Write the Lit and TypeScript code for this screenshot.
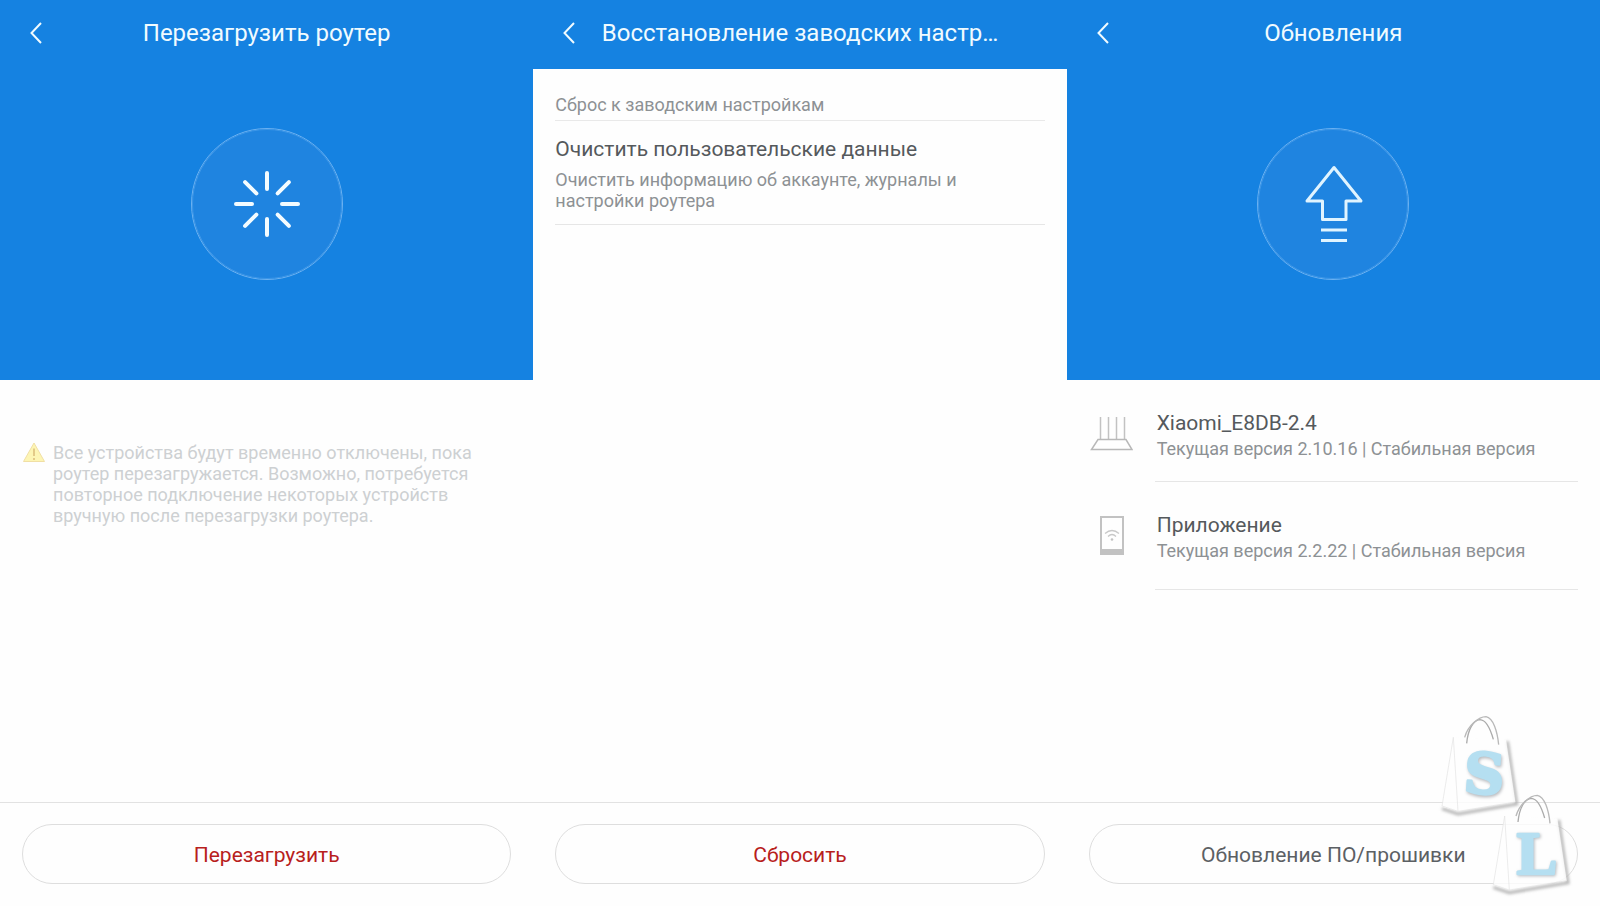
import { LitElement, html, svg, css } from "lit";
import { customElement } from "lit/decorators.js";

const backIcon = html`<svg class="chevron" viewBox="0 0 12 22" width="12" height="22" aria-hidden="true">
  <path d="M11 1 L1.5 11 L11 21" fill="none" stroke="currentColor" stroke-width="2" />
</svg>`;

const rays = [0, 45, 90, 135, 180, 225, 270, 315];

const spinnerIcon = html`<svg viewBox="0 0 150 150" width="150" height="150" aria-hidden="true">
  <g stroke="#f4fcff" stroke-width="4" stroke-linecap="round">
    ${rays.map((a) => svg`<line x1="75" y1="44" x2="75" y2="60" transform="rotate(${a} 75 75)" />`)}
  </g>
</svg>`;

const arrowIcon = html`<svg viewBox="0 0 150 150" width="150" height="150" aria-hidden="true">
  <path
    d="M76 38.5 L103 72 H88 V90.500 H64.500 V72 H49 Z M63 101 H89 M63 111.500 H89"
    fill="none" stroke="#e0f4ff" stroke-width="3" stroke-linejoin="round" />
</svg>`;

const warningIcon = html`<svg class="warn-icon" viewBox="0 0 22 21" width="22" height="21" aria-hidden="true">
  <path d="M11 1 L21.500 19.500 H0.500 Z" fill="#fdf5b4" stroke="#f0dfa4" stroke-width="1" stroke-linejoin="round" />
  <path d="M11 6.500 V14 M11 16 V18" stroke="#dcc07e" stroke-width="1.600" />
</svg>`;

const routerIcon = html`<svg viewBox="0 0 44 44" width="44" height="44" aria-hidden="true">
  <g fill="none" stroke="#c2c2c2" stroke-width="1.500">
    <path d="M11.500 5 V27 M19.500 5 V27 M27.500 5 V27 M35.500 5 V27" />
    <path d="M9 27.500 H37 L43 37.500 H2.500 Z" stroke="#b8b8b8" />
  </g>
</svg>`;

const phoneIcon = html`<svg viewBox="0 0 44 44" width="44" height="44" aria-hidden="true">
  <rect x="12" y="3" width="22" height="37" fill="none" stroke="#c2c2c2" stroke-width="2" />
  <rect x="12" y="35" width="22" height="5" fill="#c2c2c2" />
  <g fill="none" stroke="#c8c8c8" stroke-width="1.300">
    <path d="M16 19.500 Q23 13.500 30 19.500" />
    <path d="M19 22.500 Q23 18.500 27 22.500" />
  </g>
  <circle cx="23" cy="25.500" r="1.300" fill="#c2c2c2" />
</svg>`;

@customElement("phone-screen")
export class PhoneScreen extends LitElement {
  static properties = {
    heading: { type: String },
    action: { type: String },
    danger: { type: Boolean },
    hero: { type: Boolean },
  };

  declare heading: string;
  declare action: string;
  declare danger: boolean;
  declare hero: boolean;

  static styles = css`
    :host {
      display: flex;
      flex-direction: column;
      min-width: 0;
      background: #fefefe;
    }
    .bar {
      display: grid;
      grid-template-columns: 60px minmax(0, 1fr) 60px;
      align-items: center;
      height: 69px;
      padding-bottom: 4px;
      box-sizing: border-box;
      background: #1582e1;
      color: #f0fbff;
    }
    .back {
      display: flex;
      width: 60px;
      height: 48px;
      padding: 0 0 0 30px;
      align-items: center;
      border: 0;
      background: none;
      color: inherit;
      cursor: pointer;
    }
    .title {
      margin: 0;
      font-size: 24px;
      line-height: 32px;
      font-weight: 400;
      text-align: center;
      white-space: nowrap;
    }
    .hero {
      display: flex;
      justify-content: center;
      padding: 59px 0 100px;
      background: #1582e1;
    }
    .disc {
      display: flex;
      border: 1px solid #6cb2f2;
      outline: 1px solid #3d97e8;
      outline-offset: -2px;
      border-radius: 50%;
      background: #1f84e0;
    }
    .content {
      flex: 1;
    }
    .footer {
      padding: 21px 22px 22px;
      border-top: 1px solid #e2e2e2;
    }
    .action {
      display: block;
      width: 100%;
      height: 60px;
      padding: 2px 0 0;
      border: 1px solid #dedede;
      border-radius: 30px;
      background: #fefefe;
      color: #5c6064;
      font: 400 21px/28px Roboto, sans-serif;
      cursor: pointer;
    }
    .danger {
      color: #b8201c;
    }
  `;

  render() {
    return html`
      <header class="bar">
        <button class="back" aria-label="Назад">${backIcon}</button>
        <h1 class="title">${this.heading}</h1>
      </header>
      ${this.hero
        ? html`<div class="hero"><div class="disc"><slot name="icon"></slot></div></div>`
        : null}
      <main class="content"><slot></slot></main>
      <footer class="footer">
        <button class="action ${this.danger ? "danger" : ""}">${this.action}</button>
      </footer>
    `;
  }
}

@customElement("shop-watermark")
export class ShopWatermark extends LitElement {
  static styles = css`
    :host {
      display: block;
      pointer-events: none;
    }
    svg {
      display: block;
    }
    .letter {
      font-weight: 700;
      fill: #b5dff1;
      stroke: #b5dff1;
      stroke-width: 8px;
      stroke-linejoin: round;
    }
    .s {
      font-family: "DejaVu Serif", serif;
      font-size: 168px;
    }
    .l {
      font-family: "Liberation Serif", serif;
      font-size: 182px;
    }
    .shade {
      fill: #b9bcc0;
      stroke: #b9bcc0;
    }
  `;

  render() {
    return html`<svg viewBox="0 0 540 618" width="180" height="206" aria-hidden="true">
      <defs>
        <filter id="soft" x="-20%" y="-20%" width="140%" height="140%">
          <feGaussianBlur stdDeviation="4" />
        </filter>
        <g id="bag">
          <path d="M66 326 L114 342 L290 312 L262 124" fill="none" stroke="#b4b4b4" stroke-width="9" filter="url(#soft)" />
          <path d="M100 112 L258 120 L286 306 L114 334 L66 320 Z" fill="#fefefe" fill-opacity="0.820" />
          <path d="M100 112 L114 334 M100 112 L66 318 L114 334 L286 306" fill="none" stroke="#e2e2e2" stroke-width="2" />
          <g fill="none" stroke="#ababab" stroke-width="4">
            <path d="M140 130 C144 88 160 60 180 59 C200 60 212 90 220 118" />
            <path d="M134 112 C144 76 176 50 198 50 C220 54 232 94 236 134" stroke="#b9b9b9" stroke-width="4" />
          </g>
        </g>
      </defs>
      <use href="#bag" />
      <use href="#bag" x="154" y="236" />
      <text class="letter shade s" x="136" y="285" transform="rotate(4 190 220)" filter="url(#soft)">S</text>
      <text class="letter s" x="132" y="280" transform="rotate(4 190 220)">S</text>
      <text class="letter shade l" x="293" y="526" filter="url(#soft)">L</text>
      <text class="letter l" x="290" y="521">L</text>
    </svg>`;
  }
}

@customElement("app-root")
export class AppRoot extends LitElement {
  static styles = css`
    :host {
      display: grid;
      grid-template-columns: repeat(3, minmax(0, 1fr));
      position: relative;
      min-height: 100vh;
      overflow: hidden;
      background: #fefefe;
      font-family: Roboto, sans-serif;
    }
    h2,
    h3,
    p,
    ul {
      margin: 0;
      padding: 0;
      font-weight: 400;
    }
    .icon {
      display: flex;
    }
    .warning {
      display: flex;
      gap: 8px;
      padding: 62px 60px 0 23px;
      color: #cdd0d2;
      font-size: 18px;
      line-height: 21px;
    }
    .warn-icon {
      flex: none;
    }
    .settings {
      padding: 20px 22px 0;
    }
    .group {
      padding: 4px 0 3px;
      border-bottom: 1px solid #e9e9e9;
      color: #8d9194;
      font-size: 18px;
      line-height: 24px;
    }
    .setting {
      padding: 14px 40px 13px 0;
      border-bottom: 1px solid #e6e6e6;
    }
    .setting .name {
      padding-bottom: 6px;
    }
    .name {
      color: #55595c;
      font-size: 21px;
      line-height: 28px;
    }
    .note {
      color: #8d9194;
      font-size: 18px;
      line-height: 21px;
    }
    .list {
      list-style: none;
      padding: 0 22px;
    }
    .row {
      display: grid;
      grid-template-columns: 44px minmax(0, 1fr);
      gap: 22px;
    }
    .row svg {
      margin-top: 32px;
    }
    .info {
      padding: 29px 0 20px;
      border-bottom: 1px solid #e6e6e6;
    }
    .row:last-child .info {
      padding-bottom: 26px;
    }
    .info .note {
      line-height: 24px;
    }
    .info > * {
      padding-left: 2px;
    }
    .mark {
      position: absolute;
      right: 0;
      bottom: 0;
    }
  `;

  render() {
    return html`
      <phone-screen heading="Перезагрузить роутер" action="Перезагрузить" danger hero>
        <div class="icon" slot="icon">${spinnerIcon}</div>
        <div class="warning">
          ${warningIcon}
          <p>
            Все устройства будут временно отключены, пока роутер перезагружается. Возможно,
            потребуется повторное подключение некоторых устройств вручную после перезагрузки
            роутера.
          </p>
        </div>
      </phone-screen>

      <phone-screen heading="Восстановление заводских настр…" action="Сбросить" danger>
        <section class="settings">
          <h2 class="group">Сброс к заводским настройкам</h2>
          <div class="setting">
            <h3 class="name">Очистить пользовательские данные</h3>
            <p class="note">Очистить информацию об аккаунте, журналы и настройки роутера</p>
          </div>
        </section>
      </phone-screen>

      <phone-screen heading="Обновления" action="Обновление ПО/прошивки" hero>
        <div class="icon" slot="icon">${arrowIcon}</div>
        <ul class="list">
          <li class="row">
            ${routerIcon}
            <div class="info">
              <h2 class="name">Xiaomi_E8DB-2.4</h2>
              <p class="note">Текущая версия 2.10.16 | Стабильная версия</p>
            </div>
          </li>
          <li class="row">
            ${phoneIcon}
            <div class="info">
              <h2 class="name">Приложение</h2>
              <p class="note">Текущая версия 2.2.22 | Стабильная версия</p>
            </div>
          </li>
        </ul>
      </phone-screen>

      <shop-watermark class="mark"></shop-watermark>
    `;
  }
}
